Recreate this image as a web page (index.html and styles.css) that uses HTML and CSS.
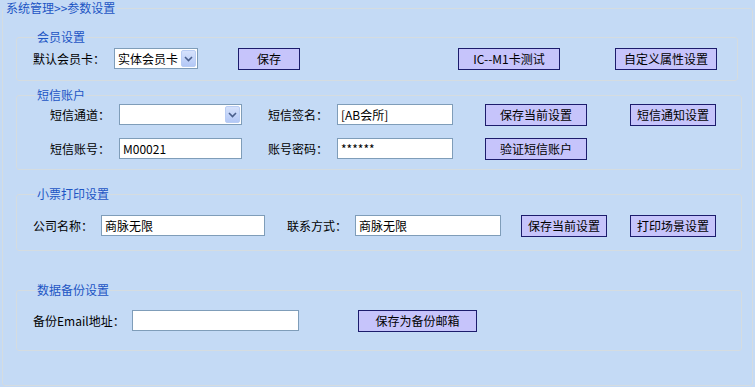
FILE: index.html
```html
<!DOCTYPE html>
<html lang="zh-CN">
<head>
    <meta charset="UTF-8">
    <title>参数设置</title>
    <link rel="stylesheet" href="styles.css">
</head>
<body>
    <fieldset class="panel">
        <legend>系统管理&gt;&gt;参数设置</legend>

        <fieldset class="group group-member">
            <legend>会员设置</legend>
            <div class="row row-member">
                <span class="lbl">默认会员卡：</span>
                <div class="combo combo-card">
                    <span class="combo-text">实体会员卡</span>
                    <span class="combo-btn"><svg width="9" height="6" viewBox="0 0 9 6"><path d="M1 1 L4.5 4.5 L8 1" fill="none" stroke="#4a5f8c" stroke-width="1.6"/></svg></span>
                </div>
                <button class="btn btn-save">保存</button>
                <button class="btn btn-wide">IC--M1卡测试</button>
                <button class="btn btn-wide">自定义属性设置</button>
            </div>
        </fieldset>

        <fieldset class="group group-sms">
            <legend>短信账户</legend>
            <div class="row row-sms">
                <span class="lbl lbl-right">短信通道：</span>
                <div class="combo combo-channel">
                    <span class="combo-text"></span>
                    <span class="combo-btn"><svg width="9" height="6" viewBox="0 0 9 6"><path d="M1 1 L4.5 4.5 L8 1" fill="none" stroke="#4a5f8c" stroke-width="1.6"/></svg></span>
                </div>
                <span class="lbl">短信签名：</span>
                <input class="field field-sign" type="text" value="[AB会所]">
                <button class="btn btn-wide">保存当前设置</button>
                <button class="btn btn-mid">短信通知设置</button>
            </div>
            <div class="row row-sms">
                <span class="lbl lbl-right">短信账号：</span>
                <input class="field field-account" type="text" value="M00021">
                <span class="lbl">账号密码：</span>
                <input class="field field-sign" type="text" value="******">
                <button class="btn btn-wide">验证短信账户</button>
            </div>
        </fieldset>

        <fieldset class="group group-print">
            <legend>小票打印设置</legend>
            <div class="row row-print">
                <span class="lbl">公司名称：</span>
                <input class="field field-company" type="text" value="商脉无限">
                <span class="lbl">联系方式：</span>
                <input class="field field-contact" type="text" value="商脉无限">
                <button class="btn btn-mid">保存当前设置</button>
                <button class="btn btn-mid">打印场景设置</button>
            </div>
        </fieldset>

        <fieldset class="group group-backup">
            <legend>数据备份设置</legend>
            <div class="row row-backup">
                <span class="lbl">备份Email地址：</span>
                <input class="field field-email" type="text" value="">
                <button class="btn btn-email">保存为备份邮箱</button>
            </div>
        </fieldset>
    </fieldset>
</body>
</html>
```

FILE: styles.css
```css
body {
    margin: 0;
    background-color: #c4daf5;
    font-family: "Noto Sans CJK SC", "DejaVu Sans", sans-serif;
    font-size: 12px;
    color: #000;
    width: 755px;
    height: 387px;
    overflow: hidden;
}
fieldset {
    border: 1px solid #d5dce0;
    border-radius: 3px;
    margin: 0;
    min-width: 0;
}
legend {
    color: #1d55c4;
    font-size: 12px;
    line-height: 14px;
    padding: 0 1px;
}
.panel {
    margin: 0 2px;
    padding: 0 10px 0 0;
    height: 386px;
    box-sizing: border-box;
}
.panel > legend {
    margin-left: 1px;
    padding: 0 2px;
    line-height: 16px;
}
.group {
    padding: 0 0 0 16px;
    margin: 7px 0 0 13px;
}
.group > legend {
    margin-left: 3px;
}
.group-member {
    margin-top: 14px;
    padding-top: 3px;
    padding-bottom: 10px;
    margin-right: 4px;
}
.group-sms {
    padding-top: 1px;
    padding-bottom: 9px;
}
.group-print {
    margin-top: 17px;
    padding-top: 13px;
    padding-bottom: 13px;
}
.group-backup {
    margin-top: 32px;
    padding-top: 12px;
    padding-bottom: 18px;
}
.row {
    display: grid;
    align-items: center;
    height: 23px;
}
.row > * {
    justify-self: start;
}
.row-member {
    grid-template-columns: 81px 124px 220px 157px auto;
}
.row-sms {
    grid-template-columns: 86px 149px 69px 148px 145px auto;
}
.row-sms + .row-sms {
    margin-top: 11px;
}
.row-print {
    grid-template-columns: 68px 186px 68px 166px 109px auto;
}
.row-backup {
    grid-template-columns: 99px 226px auto;
}
.lbl {
    white-space: nowrap;
}
.lbl-right {
    justify-self: end;
    padding-right: 9px;
}
.btn {
    font-family: inherit;
    font-size: 12px;
    height: 22px;
    padding: 0;
    background-color: #c6c4fb;
    border: 1px solid #1c1c6c;
    color: #000;
    cursor: pointer;
}
.btn-save {
    width: 62px;
}
.btn-wide {
    width: 102px;
}
.btn-mid {
    width: 86px;
}
.btn-email {
    width: 119px;
}
.field {
    font-family: inherit;
    font-size: 12px;
    height: 21px;
    box-sizing: border-box;
    border: 1px solid #7f9db9;
    background: #fff;
    padding: 0 3px;
    color: #000;
}
.field-sign {
    width: 116px;
}
.field-account {
    width: 123px;
}
.field-company {
    width: 164px;
}
.field-contact {
    width: 146px;
}
.field-email {
    width: 167px;
}
.combo {
    display: flex;
    align-items: center;
    box-sizing: border-box;
    height: 21px;
    border: 1px solid #7f9db9;
    background: #fff;
    padding: 1px;
}
.combo-card {
    width: 84px;
}
.combo-channel {
    width: 123px;
}
.combo-text {
    flex: 1;
    padding-left: 2px;
    white-space: nowrap;
}
.combo-btn {
    display: flex;
    align-items: center;
    justify-content: center;
    width: 15px;
    height: 17px;
    box-sizing: border-box;
    border: 1px solid #b9cdf4;
    border-radius: 2px;
    background: linear-gradient(#d6e2fc, #b3c8f6);
}
```
